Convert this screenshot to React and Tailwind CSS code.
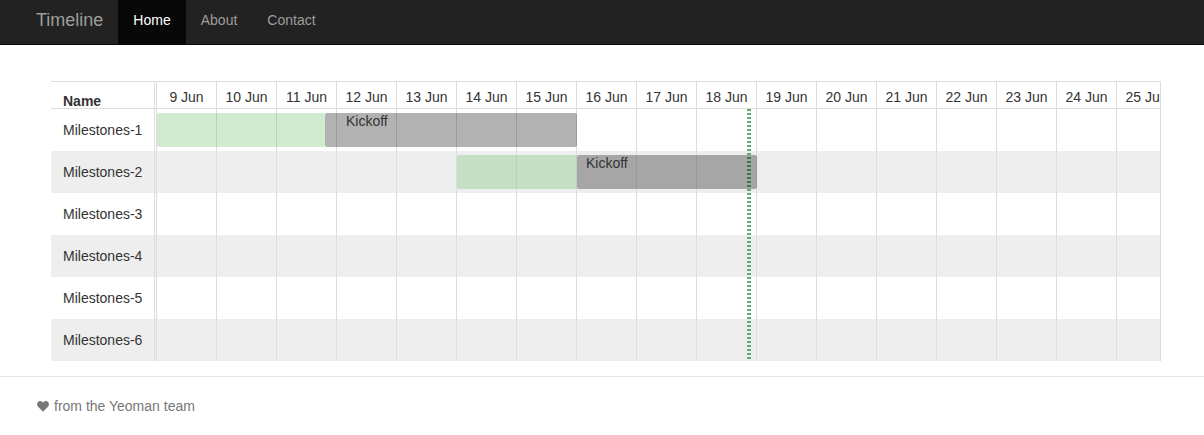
import React from "react";

const days = Array.from({ length: 17 }, (_, i) => `${i + 9} Jun`);

const rows = [
  {
    name: "Milestones-1",
    bars: [
      { left: 0, width: 168, kind: "green" },
      { left: 168, width: 252, kind: "gray" },
    ],
    label: { left: 189, text: "Kickoff" },
  },
  {
    name: "Milestones-2",
    bars: [
      { left: 300, width: 120, kind: "green" },
      { left: 420, width: 180, kind: "gray" },
    ],
    label: { left: 429, text: "Kickoff" },
  },
  { name: "Milestones-3", bars: [] },
  { name: "Milestones-4", bars: [] },
  { name: "Milestones-5", bars: [] },
  { name: "Milestones-6", bars: [] },
];

function Heart() {
  return (
    <svg width="12" height="11" viewBox="0 0 24 22" className="shrink-0">
      <path
        d="M12 21.5 L2.2 11.6 C-0.6 8.8 -0.6 4.2 2.2 1.6 C4.8 -0.8 8.8 -0.4 11 2.2 L12 3.4 L13 2.2 C15.2 -0.4 19.2 -0.8 21.8 1.6 C24.6 4.2 24.6 8.8 21.8 11.6 Z"
        fill="#777"
      />
    </svg>
  );
}

export default function App() {
  return (
    <div className="font-['Liberation_Sans',Arial,sans-serif] text-[14px] text-[#333] bg-white min-h-[435px]">
      {/* Navbar */}
      <nav className="flex h-[45px] bg-[#222] border-b border-[#080808] pl-[21px]">
        <a className="px-[15px] pt-[10px] text-[18px] leading-[20px] text-[#9d9d9d]">Timeline</a>
        <a className="px-[15px] pt-[10px] leading-[20px] text-white bg-[#080808]">Home</a>
        <a className="px-[15px] pt-[10px] leading-[20px] text-[#9d9d9d]">About</a>
        <a className="px-[15px] pt-[10px] leading-[20px] text-[#9d9d9d]">Contact</a>
      </nav>

      {/* Gantt */}
      <div className="pt-[36px] pl-[51px]">
        <div className="flex w-[1110px] border-t border-r border-[#ddd]">
          {/* Name column */}
          <div className="w-[104px] shrink-0 border-r border-[#ddd]">
            <div className="h-[27px] border-b border-[#ddd] pl-[12px] pt-[12px] leading-[14px] font-bold">
              Name
            </div>
            {rows.map((r, i) => (
              <div
                key={r.name}
                className={
                  i % 2 === 1
                    ? "h-[42px] flex items-center pl-[12px] leading-[20px] bg-[#eee]"
                    : "h-[42px] flex items-center pl-[12px] leading-[20px]"
                }
              >
                {r.name}
              </div>
            ))}
          </div>
          {/* Spacer */}
          <div className="w-[2px] shrink-0 border-r border-[#ddd] flex flex-col">
            <div className="h-[27px] border-b border-[#ddd]" />
            {rows.map((r, i) => (
              <div key={r.name} className={i % 2 === 1 ? "h-[42px] bg-[#eee]" : "h-[42px]"} />
            ))}
          </div>
          {/* Timeline */}
          <div className="relative flex-1 overflow-hidden">
            <div className="flex h-[27px] border-b border-[#ddd]">
              {days.map((d) => (
                <div
                  key={d}
                  className="w-[60px] shrink-0 border-r border-[#ddd] pt-[8px] leading-[14px] text-center whitespace-nowrap"
                >
                  {d}
                </div>
              ))}
            </div>
            {rows.map((r, i) => (
              <div
                key={r.name}
                className={i % 2 === 1 ? "relative flex h-[42px] bg-[#eee]" : "relative flex h-[42px]"}
              >
                {days.map((d) => (
                  <div key={d} className="w-[60px] shrink-0 border-r border-[#ddd]" />
                ))}
              </div>
            ))}
            {/* Today line */}
            <div className="absolute top-[27px] bottom-0 left-[590px] w-[4px] bg-[repeating-linear-gradient(to_bottom,#5cad70_0px,#5cad70_2px,transparent_2px,transparent_4px)]" />
            {/* Bars */}
            {rows.map((r, i) => (
              <div
                key={r.name}
                className="absolute left-0 right-0 h-[42px]"
                style={{ top: 27 + i * 42 }}
              >
                {r.bars.map((b, j) => (
                  <div
                    key={j}
                    className={
                      b.kind === "green"
                        ? "absolute top-[4px] h-[34px] rounded-[2px] bg-[rgba(100,190,100,0.3)]"
                        : "absolute top-[4px] h-[34px] rounded-[2px] bg-[rgba(0,0,0,0.3)]"
                    }
                    style={{ left: b.left, width: b.width }}
                  />
                ))}
                {r.label && (
                  <div
                    className="absolute top-[5px] leading-[14px] text-[#333] whitespace-nowrap"
                    style={{ left: r.label.left }}
                  >
                    {r.label.text}
                  </div>
                )}
              </div>
            ))}
          </div>
        </div>
      </div>

      {/* Footer */}
      <footer className="mt-[15px] border-t border-[#e5e5e5] pt-[19px] pl-[37px] flex items-center gap-[5px] leading-[20px] text-[#777]">
        <Heart />
        <span>from the Yeoman team</span>
      </footer>
    </div>
  );
}
